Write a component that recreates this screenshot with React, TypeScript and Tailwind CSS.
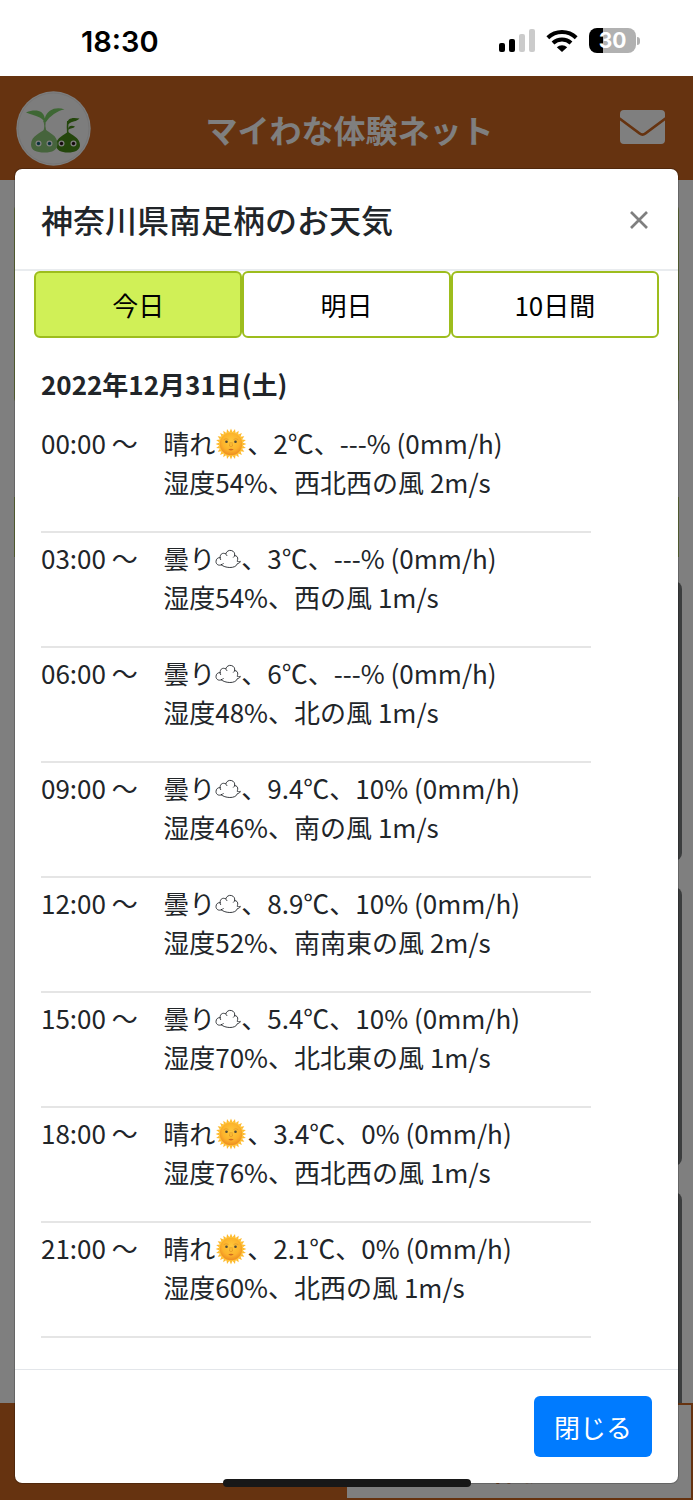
import { useState } from "react"

type Forecast = {
  time: string
  weather: "sunny" | "cloudy"
  temperature: string
  rain: string
  humidity: number
  wind: string
  windSpeed: number
}

const tabs = ["今日", "明日", "10日間"]

const forecasts: Forecast[] = [
  { time: "00:00", weather: "sunny", temperature: "2", rain: "---", humidity: 54, wind: "西北西", windSpeed: 2 },
  { time: "03:00", weather: "cloudy", temperature: "3", rain: "---", humidity: 54, wind: "西", windSpeed: 1 },
  { time: "06:00", weather: "cloudy", temperature: "6", rain: "---", humidity: 48, wind: "北", windSpeed: 1 },
  { time: "09:00", weather: "cloudy", temperature: "9.4", rain: "10", humidity: 46, wind: "南", windSpeed: 1 },
  { time: "12:00", weather: "cloudy", temperature: "8.9", rain: "10", humidity: 52, wind: "南南東", windSpeed: 2 },
  { time: "15:00", weather: "cloudy", temperature: "5.4", rain: "10", humidity: 70, wind: "北北東", windSpeed: 1 },
  { time: "18:00", weather: "sunny", temperature: "3.4", rain: "0", humidity: 76, wind: "西北西", windSpeed: 1 },
  { time: "21:00", weather: "sunny", temperature: "2.1", rain: "0", humidity: 60, wind: "北西", windSpeed: 1 },
]

const rays = Array.from({ length: 24 }, (_, i) => i * 15)

function SunIcon() {
  return (
    <svg viewBox="0 0 32 32" role="img" aria-label="太陽" className="inline-block size-8 align-[-6px]">
      <defs>
        <radialGradient id="sun-face" cx="50%" cy="40%" r="60%">
          <stop offset="0%" stopColor="#ffc93c" />
          <stop offset="65%" stopColor="#fcb32b" />
          <stop offset="100%" stopColor="#ee8d22" />
        </radialGradient>
      </defs>
      {rays.map((angle) => (
        <path key={angle} d="M14.4 4.500 16 .6l1.600 3.900z" fill="#fdb92c" transform={`rotate(${angle} 16 16)`} />
      ))}
      <circle cx="16" cy="16" r="12.200" fill="#ffc53a" />
      <circle cx="16" cy="16" r="11.200" fill="url(#sun-face)" />
      <path d="M8.700 11.600q2.300-1.600 4.700-.2M18.600 11.400q2.400-1.400 4.700.2" fill="none" stroke="#e09426" strokeWidth="0.700" />
      <ellipse cx="11.500" cy="13.700" rx="1.300" ry="1.300" fill="#4d4638" />
      <ellipse cx="20.500" cy="13.700" rx="1.300" ry="1.300" fill="#4d4638" />
      <path d="M15.200 14 14.500 18q1.500 1.200 3 0l-.7-4" fill="none" stroke="#e08f22" strokeWidth="0.700" />
      <path d="M13.300 21.300q2.700-1.200 5.400 0-2.700 2.400-5.400 0z" fill="#cf6a20" />
    </svg>
  )
}

function CloudIcon() {
  return (
    <svg
      viewBox="0 0 26 26"
      role="img"
      aria-label="雲"
      className="inline-block size-[26px] align-[-3px]"
      fill="none"
      stroke="#212529"
      strokeWidth="0.900"
      strokeLinecap="round"
      strokeLinejoin="round"
    >
      <path d="M6.300 18.800C3.600 20.200.9 18.200 1 15.500 1 13 3 11.300 5.200 11.700 4.800 8.800 7 6.800 9.300 7.400c.6.100 1 .3 1.400.6C11.500 5.200 14 3.900 16.300 4.500c2.600.6 3.800 2.700 3.300 5.100 2.100-.1 3.500 1.700 3.100 3.700-.1.800-.3 1.400-.6 1.900 1 .6 2.100.7 3.200.1-.2 1.300-1.300 2.200-2.900 2.300-.6 2.600-4 4-7.600 3.900-3.600-.1-6.700-1.100-8.500-2.700z" />
      <path d="M5.200 11.700c-.1.800.1 1.400.4 1.900M10.700 8c.7.500 1 .9 1.200 1.500M19.600 9.600c-.2.800-.6 1.300-1.100 1.700M6.300 18.800c.9-.2 1.500-.6 2-1.300" />
    </svg>
  )
}

function MailIcon() {
  return (
    <svg viewBox="0 0 45 34" className="h-[34px] w-[45px]" fill="currentColor">
      <path d="M4 0h37a4 4 0 0 1 4 4v3.200L24.800 22.300a3.800 3.800 0 0 1-4.600 0L0 7.200V4a4 4 0 0 1 4-4z" />
      <path d="M0 10.500 18.800 24.600a6.200 6.200 0 0 0 7.400 0L45 10.500V30a4 4 0 0 1-4 4H4a4 4 0 0 1-4-4z" />
    </svg>
  )
}

function Mascots() {
  return (
    <svg viewBox="0 0 75 75" role="img" aria-label="マイわな体験ネット ロゴ" className="size-[75px]">
      <circle cx="37.500" cy="37.500" r="37.200" fill="#fafafa" />
      <circle cx="37.500" cy="37.500" r="35.500" fill="none" stroke="#ebebeb" />
      <g fill="#488c18">
        <path d="M51 43q-.5-8 0-13h1.600q-.6 7 0 13z" />
        <path d="M51 34c0-7 5-8 12.500-6.500-3 3.500-7 2-11.500 6zM52 39c0-4 3-5 7-3.500-2 2.200-4 1.200-7 3.500z" />
        <path d="M52 41c3 2 12 6 12 13 0 5-5 7.500-12 7.500S40 59 40 54c0-7 9-11 12-13z" />
      </g>
      <g fill="#8cc878">
        <path d="M27.500 40q1.500-6-.3-10h2.600q-1 5 .5 10z" />
        <path d="M29 38c4 4 12.500 6 12.500 15 0 6-5 8.500-13 8.500s-13.500-2-13.500-8c0-9 10-11.500 14-15.500z" />
      </g>
      <g fill="#7cce68">
        <path d="M28 31C27 26 19 25 10 21.500c9-3.500 17.500-2.500 18.800 6C31 18 41 15.500 48.500 18.500c-7 1-15 7-18.500 12.500z" />
      </g>
      {[22.5, 33.5, 45.5, 57.5].map((x, i) => (
        <g key={x}>
          <circle cx={x} cy="52.500" r="3" fill="#fff" />
          <circle cx={x} cy="52.500" r="1.700" fill={i < 2 ? "#146478" : "#281018"} />
        </g>
      ))}
    </svg>
  )
}

function StatusBar() {
  return (
    <div className="flex h-[76px] items-center justify-between bg-white pr-[53px] pl-[81px] text-black">
      <span className="mt-2 font-[Inter] text-[29px] leading-8 font-semibold">18:30</span>
      <div className="mt-[5px] flex items-center gap-[11px]">
        <svg viewBox="0 0 36 23" aria-label="電波" className="h-[23px] w-9">
          <rect x="0" y="14" width="6" height="9" rx="2" />
          <rect x="10" y="10" width="6" height="13" rx="2" />
          <rect x="20" y="5" width="6" height="18" rx="2" fill="#cbcbcb" />
          <rect x="30" y="0" width="6" height="23" rx="2" fill="#cbcbcb" />
        </svg>
        <svg viewBox="0 0 32 23" aria-label="Wi-Fi" className="h-[23px] w-8">
          <g fill="none" stroke="#000" strokeWidth="4">
            <path d="M1.800 8.800a20.400 20.400 0 0 1 28.400 0" />
            <path d="M7 14a13 13 0 0 1 18 0" />
          </g>
          <path d="M10.800 18.200a7.600 7.600 0 0 1 10.400 0L16 23z" />
        </svg>
        <div className="flex items-center gap-px">
          <div className="flex h-[25px] w-[47px] items-center justify-center rounded-lg bg-linear-to-r from-black from-30% to-[#b1b1b1] to-30% pt-px font-[Inter] text-[21px] leading-6 font-bold text-white">
            30
          </div>
          <span className="h-2 w-[3px] rounded-r-full bg-[#b1b1b1]" />
        </div>
      </div>
    </div>
  )
}

// Page that stays behind the dimmed backdrop
function HomePage() {
  return (
    <div className="col-start-1 row-start-1 flex flex-col bg-white">
      <header className="flex h-[104px] items-center justify-between bg-[#cd6620] pr-7 pl-4 text-white">
        <Mascots />
        <h1 className="mr-3 pt-0.5 text-[32px] leading-10 font-bold">マイわな体験ネット</h1>
        <a href="#mail" aria-label="メール" className="pb-0.5">
          <MailIcon />
        </a>
      </header>

      <div className="flex flex-1 flex-col pt-6 pr-[11px] pl-[14px]">
        <div className="mr-[3px] h-[200px] rounded-md border border-[#c5dc74]" />
        <div className="mt-[93px] mr-[3px] h-[60px] border border-[#c5dc74]" />
        <div className="mt-6 ml-1 h-[280px] rounded-lg bg-[#777b7c]" />
        <div className="mt-[26px] ml-1 h-[279px] rounded-lg bg-[#777b7c]" />
        <div className="mt-[26px] ml-1 flex-1 rounded-t-lg bg-[#777b7c]" />
      </div>

      <nav className="grid h-[97px] grid-cols-2 bg-[#cd6620] text-[26px] leading-10 font-bold">
        <a href="#home" className="flex items-end justify-center pb-3 text-white">
          ホーム
        </a>
        <a
          href="#experience"
          className="flex items-end justify-center border-2 border-l-0 border-[#cd6620] bg-white pb-2 text-[#cd6620]"
        >
          体験
        </a>
      </nav>
    </div>
  )
}

export default function App() {
  const [activeTab, setActiveTab] = useState("今日")
  const [open, setOpen] = useState(true)

  return (
    <main className="relative flex min-h-screen flex-col font-['Noto_Sans_CJK_JP',sans-serif] text-[26px] leading-[39px] text-[#212529]">
      <StatusBar />

      <div className="grid flex-1 grid-cols-1">
        <HomePage />

        {open && (
          <div className="z-10 col-start-1 row-start-1 bg-black/50 px-[14px] pt-[92px] pb-4">
            <div
              role="dialog"
              aria-labelledby="weather-title"
              className="rounded-lg border border-black/20 bg-white bg-clip-padding"
            >
              <div className="flex items-center justify-between border-b-2 border-[#e9ecef] p-[26px]">
                <h2 id="weather-title" className="text-[32px] leading-[48px] font-medium">
                  神奈川県南足柄のお天気
                </h2>
                <button type="button" aria-label="閉じる" onClick={() => setOpen(false)}>
                  <svg viewBox="0 0 26 26" className="size-[26px]" stroke="#7f7f7f" strokeWidth="2.700">
                    <path d="m5 6 16 16M21 6 5 22" />
                  </svg>
                </button>
              </div>

              <div className="flex px-[19px]">
                {tabs.map((tab) => (
                  <button
                    key={tab}
                    type="button"
                    aria-pressed={tab === activeTab}
                    onClick={() => setActiveTab(tab)}
                    className={`flex-1 rounded-md border-2 border-[#9dbd1d] py-3 text-black ${
                      tab === activeTab ? "bg-[#d0f057]" : "bg-white"
                    }`}
                  >
                    {tab}
                  </button>
                ))}
              </div>

              <div className="p-[26px]">
                <h3 className="mb-5 font-bold">2022年12月31日(土)</h3>

                {forecasts.map((item) => (
                  <div key={item.time} className="mb-[5px]">
                    <div className="flex">
                      <p className="w-1/5 shrink-0">{item.time} 〜</p>
                      <div className="flex-1">
                        <p className="h-[39px]">
                          {item.weather === "sunny" ? "晴れ" : "曇り"}
                          {item.weather === "sunny" ? <SunIcon /> : <CloudIcon />}
                          、{item.temperature}℃、{item.rain}% (0mm/h)
                        </p>
                        <p>
                          湿度{item.humidity}%、{item.wind}の風 {item.windSpeed}m/s
                        </p>
                      </div>
                    </div>
                    <hr className="mt-[30px] w-[90%] border-t-2 border-[#e5e5e5]" />
                  </div>
                ))}
              </div>

              <div className="flex justify-end border-t border-[#e3e6ea] p-[26px]">
                <button
                  type="button"
                  onClick={() => setOpen(false)}
                  className="rounded-md bg-[#007bff] px-5 py-[11px] text-white"
                >
                  閉じる
                </button>
              </div>
            </div>
          </div>
        )}
      </div>

      {/* home indicator */}
      <div className="absolute inset-x-0 bottom-[13px] z-20 mx-auto h-2 w-[248px] rounded-full bg-[#181818]" />
    </main>
  )
}
